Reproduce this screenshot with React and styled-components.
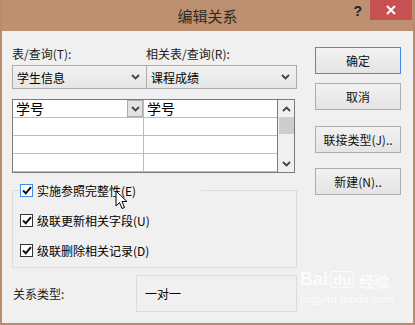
import React from "react";
import styled, { createGlobalStyle } from "styled-components";

const Global = createGlobalStyle`
  html, body { margin: 0; padding: 0; background: #f0f0f0; }
  body { font-family: "Noto Sans CJK SC", "Liberation Sans", sans-serif; }
  * { box-sizing: border-box; }
`;

const Window = styled.div`
  position: relative;
  width: 415px;
  height: 325px;
  background: #f0f0f0;
  border: 2px solid #b88c6b;
  border-top: none;
  overflow: hidden;
`;

const TitleBar = styled.div`
  position: relative;
  height: 31px;
  margin: 0 -2px;
  background: #bc9070;
  display: flex;
  align-items: center;
  justify-content: center;
  font-size: 15px;
  color: #2e2a26;
`;

const Help = styled.div`
  position: absolute;
  right: 53px;
  top: 3px;
  font-family: "Liberation Sans", sans-serif;
  font-weight: bold;
  font-size: 14px;
  color: #222;
`;

const Close = styled.div`
  position: absolute;
  right: 3px;
  top: 0;
  width: 42px;
  height: 20px;
  background: #c75050;
  display: flex;
  align-items: center;
  justify-content: center;
`;

const Body = styled.div`
  display: flex;
  gap: 18px;
  padding: 14px 0 0 10px;
  font-size: 12px;
  color: #000;
`;

const LeftCol = styled.div`
  width: 285px;
  display: flex;
  flex-direction: column;
`;

const RightCol = styled.div`
  width: 86px;
  display: flex;
  flex-direction: column;
  padding-top: 2px;
`;

const LabelRow = styled.div`
  display: grid;
  grid-template-columns: 134px 1fr;
  height: 17px;
  line-height: 17px;
  color: #1a1a1a;
`;

const ComboRow = styled.div`
  display: grid;
  grid-template-columns: 135px 150px;
  margin-top: 3px;
  height: 24px;
`;

const Combo = styled.div`
  display: flex;
  align-items: center;
  justify-content: space-between;
  padding: 0 6px 0 4px;
  border: 1px solid #acacac;
  margin-left: ${(p) => (p.$joined ? "-1px" : "0")};
  background: linear-gradient(#f2f2f2, #e5e5e5);
  font-size: 12px;
`;

const Chevron = ({ up }) => (
  <svg width="9" height="6" viewBox="0 0 9 6">
    <path
      d={up ? "M1 5 L4.5 1.5 L8 5" : "M1 1 L4.5 4.5 L8 1"}
      fill="none"
      stroke="#444"
      strokeWidth="1.8"
    />
  </svg>
);

const FieldGrid = styled.div`
  margin-top: 10px;
  width: 283px;
  height: 74px;
  border: 1px solid #7a7a7a;
  display: flex;
  background: #fff;
`;

const Table = styled.div`
  flex: 1;
  display: grid;
  grid-template-columns: 131px 1fr;
  grid-auto-rows: 18px;
`;

const Cell = styled.div`
  position: relative;
  border-right: ${(p) => (p.$last ? "none" : "1px solid #bdbdbd")};
  border-bottom: 1px solid #bdbdbd;
  font-size: 14px;
  line-height: 17px;
  padding-left: 3px;
`;

const CellButton = styled.div`
  position: absolute;
  right: 0;
  top: 0;
  width: 16px;
  height: 17px;
  background: #e3e3e3;
  border: 1px solid #acacac;
  display: flex;
  align-items: center;
  justify-content: center;
`;

const ScrollBar = styled.div`
  width: 17px;
  border-left: 1px solid #7a7a7a;
  background: #f0f0f0;
  display: flex;
  flex-direction: column;
  align-items: center;
`;

const ScrollArrow = styled.div`
  height: 17px;
  display: flex;
  align-items: center;
  justify-content: center;
`;

const Thumb = styled.div`
  width: 15px;
  height: 17px;
  background: #cdcdcd;
`;

const Track = styled.div`
  flex: 1;
`;

const GroupBox = styled.div`
  margin-top: 17px;
  width: 285px;
  height: 78px;
  border: 1px solid #dcdcdc;
  padding-left: 7px;
  display: flex;
  flex-direction: column;
  gap: 14px;
`;

const CheckRow = styled.label`
  display: flex;
  align-items: center;
  gap: 4px;
  height: 16px;
  width: ${(p) => (p.$legend ? "181px" : "auto")};
  margin-top: ${(p) => (p.$legend ? "-9px" : "0")};
  background: #f0f0f0;
  font-size: 12px;
`;

const Box = styled.span`
  width: 13px;
  height: 13px;
  background: #fff;
  border: 1px solid ${(p) => (p.$focus ? "#3c8ee8" : "#333")};
  display: flex;
  align-items: center;
  justify-content: center;
`;

const Tick = () => (
  <svg width="10" height="9" viewBox="0 0 10 9">
    <path d="M1 4.5 L3.8 7.2 L9 1.2" fill="none" stroke="#111" strokeWidth="2" />
  </svg>
);

const TypeRow = styled.div`
  margin-top: 7px;
  display: flex;
  align-items: center;
  padding-left: 1px;
`;

const TypeLabel = styled.div`
  width: 123px;
  color: #1a1a1a;
`;

const TypeBox = styled.div`
  width: 161px;
  height: 37px;
  border: 1px solid #dcdcdc;
  display: flex;
  align-items: center;
  padding-left: 8px;
`;

const Button = styled.div`
  height: 27px;
  margin-top: ${(p) => p.$gap}px;
  border: 1px solid ${(p) => (p.$default ? "#3c8ee8" : "#adadad")};
  background: linear-gradient(#f2f2f2, #e4e4e4);
  display: flex;
  align-items: center;
  justify-content: center;
  font-size: 12px;
  color: #111;
`;

const Watermark = styled.div`
  position: absolute;
  left: 298px;
  top: 270px;
  color: rgba(255, 255, 255, 0.8);
  font-family: "Liberation Sans", sans-serif;
  line-height: 1;
`;

const WaterTop = styled.div`
  font-size: 18px;
  font-weight: bold;
  display: flex;
  align-items: flex-end;
  gap: 2px;
`;

const WaterDu = styled.span`
  font-size: 15px;
  padding: 0 2px;
  border-radius: 3px;
  border: 1px solid rgba(255, 255, 255, 0.8);
`;

const WaterCn = styled.span`
  font-family: "Noto Sans CJK SC", sans-serif;
  font-size: 15px;
  margin-left: 3px;
`;

const WaterSub = styled.div`
  margin-top: 6px;
  font-size: 11px;
  letter-spacing: 0.3px;
`;

const Cursor = styled.svg`
  position: absolute;
  left: 113px;
  top: 190px;
`;

export default function App() {
  const rows = [0, 1, 2];
  return (
    <>
      <Global />
      <Window>
        <TitleBar>
          编辑关系
          <Help>?</Help>
          <Close>
            <svg width="10" height="10" viewBox="0 0 10 10">
              <path d="M1 1 L9 9 M9 1 L1 9" stroke="#fff" strokeWidth="2" />
            </svg>
          </Close>
        </TitleBar>
        <Body>
          <LeftCol>
            <LabelRow>
              <span>表/查询(T):</span>
              <span>相关表/查询(R):</span>
            </LabelRow>
            <ComboRow>
              <Combo>
                学生信息
                <Chevron />
              </Combo>
              <Combo $joined>
                课程成绩
                <Chevron />
              </Combo>
            </ComboRow>
            <FieldGrid>
              <Table>
                <Cell>
                  学号
                  <CellButton>
                    <Chevron />
                  </CellButton>
                </Cell>
                <Cell $last>学号</Cell>
                {rows.map((r) => (
                  <React.Fragment key={r}>
                    <Cell />
                    <Cell $last />
                  </React.Fragment>
                ))}
              </Table>
              <ScrollBar>
                <ScrollArrow>
                  <Chevron up />
                </ScrollArrow>
                <Thumb />
                <Track />
                <ScrollArrow>
                  <Chevron />
                </ScrollArrow>
              </ScrollBar>
            </FieldGrid>
            <GroupBox>
              <CheckRow $legend>
                <Box $focus>
                  <Tick />
                </Box>
                实施参照完整性(E)
              </CheckRow>
              <CheckRow>
                <Box>
                  <Tick />
                </Box>
                级联更新相关字段(U)
              </CheckRow>
              <CheckRow>
                <Box>
                  <Tick />
                </Box>
                级联删除相关记录(D)
              </CheckRow>
            </GroupBox>
            <TypeRow>
              <TypeLabel>关系类型:</TypeLabel>
              <TypeBox>一对一</TypeBox>
            </TypeRow>
          </LeftCol>
          <RightCol>
            <Button $default $gap={0}>确定</Button>
            <Button $gap={9}>取消</Button>
            <Button $gap={16}>联接类型(J)..</Button>
            <Button $gap={15}>新建(N)..</Button>
          </RightCol>
        </Body>
        <Cursor width="14" height="21" viewBox="0 0 14 21">
          <path
            d="M1 1 L1 16 L4.5 12.5 L7 18.5 L9.5 17.5 L7 11.5 L12 11.5 Z"
            fill="#fff"
            stroke="#000"
            strokeWidth="1"
          />
        </Cursor>
        <Watermark>
          <WaterTop>
            Bai<WaterDu>du</WaterDu>
            <WaterCn>经验</WaterCn>
          </WaterTop>
          <WaterSub>jingyan.baidu.com</WaterSub>
        </Watermark>
      </Window>
    </>
  );
}
